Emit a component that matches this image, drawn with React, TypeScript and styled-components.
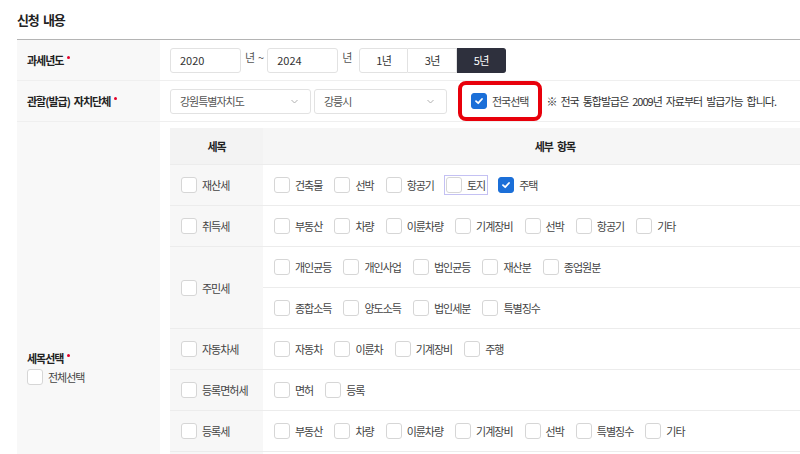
import styled, { createGlobalStyle } from "styled-components";

const GlobalStyle = createGlobalStyle`
    html, body {
        margin: 0;
        padding: 0;
        background: #ffffff;
        overflow: hidden;
    }

    body {
        font-family: "Noto Sans CJK KR", "Noto Sans", sans-serif;
        font-size: 11px;
        letter-spacing: -1px;
        word-spacing: 2.5px;
        color: #333333;
    }
`;

const Page = styled.div`
    padding: 0 17px;
`;

const Title = styled.h2`
    margin: 0;
    height: 39px;
    display: flex;
    align-items: center;
    font-size: 13px;
    font-weight: 700;
    letter-spacing: -1.3px;
    word-spacing: 3px;
    color: #222222;
`;

const Form = styled.div`
    width: 840px;
    border-top: 1px solid #b4b4b4;
`;

const FormRow = styled.div`
    display: grid;
    grid-template-columns: 143px 1fr;
    border-bottom: 1px solid #efefef;
    min-height: 40px;
`;

const LabelCell = styled.div<{ $lift?: number }>`
    background: #f8f8f8;
    padding: 0 10px ${(p) => p.$lift ?? 0}px;
    display: flex;
    flex-direction: column;
    justify-content: center;
    gap: 3px;
`;

const LabelText = styled.span`
    font-weight: 700;
    color: #222222;
    display: inline-flex;
    align-items: flex-start;
`;

const Required = styled.i`
    display: inline-block;
    width: 3px;
    height: 3px;
    border-radius: 50%;
    background: #e4002b;
    margin: 4px 0 0 4px;
`;

const ValueCell = styled.div<{ $pad?: boolean }>`
    padding: ${(p) => (p.$pad ? "6px 10px" : "0 10px")};
    display: flex;
    align-items: center;
    gap: 3px;
`;

const Input = styled.div`
    width: 71px;
    height: 25px;
    box-sizing: border-box;
    border: 1px solid #e2e2e2;
    border-radius: 3px;
    padding: 0 9px;
    display: flex;
    align-items: center;
    color: #333333;
    letter-spacing: 0;
`;

const Unit = styled.span`
    color: #555555;
    margin-bottom: 6px;
    padding: 0 1px;
`;

const ButtonGroup = styled.div`
    display: flex;
    margin-left: 4px;
`;

const RangeButton = styled.button<{ $active?: boolean; $pos: "first" | "mid" | "last" }>`
    width: 49px;
    height: 25px;
    margin: 0;
    padding: 0;
    font: inherit;
    letter-spacing: -0.5px;
    cursor: pointer;
    border: 1px solid ${(p) => (p.$active ? "#2e303d" : "#e2e2e2")};
    border-left-width: ${(p) => (p.$pos === "first" ? "1px" : "0")};
    background: ${(p) => (p.$active ? "#2e303d" : "#ffffff")};
    color: ${(p) => (p.$active ? "#ffffff" : "#333333")};
    border-radius: ${(p) =>
        p.$pos === "first" ? "3px 0 0 3px" : p.$pos === "last" ? "0 3px 3px 0" : "0"};
`;

const Select = styled.div<{ $width: number }>`
    width: ${(p) => p.$width}px;
    height: 25px;
    box-sizing: border-box;
    border: 1px solid #e2e2e2;
    border-radius: 3px;
    padding: 0 12px 0 9px;
    display: flex;
    align-items: center;
    justify-content: space-between;
    color: #555555;
`;

const Highlight = styled.div`
    height: 40px;
    box-sizing: border-box;
    border: 4px solid #e8000b;
    border-radius: 8px;
    padding: 0 10px 0 9px;
    margin-left: 8px;
    display: flex;
    align-items: center;
`;

const Notice = styled.span`
    color: #333333;
    margin-left: 1px;
`;

const CheckItem = styled.label<{ $focused?: boolean }>`
    display: inline-flex;
    align-items: center;
    gap: 5px;
    color: #444444;
    white-space: nowrap;
    cursor: pointer;
    outline: ${(p) => (p.$focused ? "1px solid #c4c1f3" : "none")};
    outline-offset: 1px;
    padding-right: ${(p) => (p.$focused ? "1px" : "0")};
`;

const Box = styled.span<{ $checked?: boolean }>`
    width: 16px;
    height: 16px;
    box-sizing: border-box;
    border-radius: 3px;
    border: 1px solid ${(p) => (p.$checked ? "#1b6fd8" : "#d6d6d6")};
    background: ${(p) => (p.$checked ? "#1b6fd8" : "#ffffff")};
    display: inline-flex;
    align-items: center;
    justify-content: center;
    flex-shrink: 0;
`;

const TaxTable = styled.div`
    width: 100%;
    border-bottom: 1px solid #ececec;
`;

const TaxRow = styled.div<{ $head?: boolean }>`
    display: grid;
    grid-template-columns: 93px 1fr;
    background: ${(p) => (p.$head ? "#f5f5f5" : "#ffffff")};
    border-bottom: 1px solid #ececec;

    &:last-child {
        border-bottom: none;
    }
`;

const HeadCell = styled.div<{ $first?: boolean }>`
    height: 36px;
    display: flex;
    align-items: center;
    justify-content: center;
    font-weight: 700;
    color: #222222;
    background: ${(p) => (p.$first ? "#f3f3f3" : "#f6f6f6")};
`;

const NameCell = styled.div`
    background: #f7f7f7;
    padding: 0 11px;
    display: flex;
    align-items: center;
`;

const Lines = styled.div`
    display: flex;
    flex-direction: column;
`;

const Line = styled.div`
    height: 40px;
    padding: 0 11px;
    display: flex;
    align-items: center;
    gap: 12px;
    border-bottom: 1px solid #ececec;

    &:last-child {
        border-bottom: none;
    }
`;

const Check = () => (
    <svg width="10" height="10" viewBox="0 0 10 10">
        <polyline points="2,5.2 4.2,7.2 8,3" fill="none" stroke="#fff" strokeWidth="1.8" strokeLinecap="round" strokeLinejoin="round" />
    </svg>
);

const Chevron = () => (
    <svg width="7" height="5" viewBox="0 0 7 5">
        <polyline points="0.5,1 3.5,4 6.5,1" fill="none" stroke="#b0b0b0" strokeWidth="1" />
    </svg>
);

const Checkbox = ({ label, checked, focused }: { label: string; checked?: boolean; focused?: boolean }) => (
    <CheckItem $focused={focused}>
        <Box $checked={checked}>{checked && <Check />}</Box>
        <span>{label}</span>
    </CheckItem>
);

type Tax = { name: string; lines: string[][] };

const taxes: Tax[] = [
    { name: "재산세", lines: [["건축물", "선박", "항공기", "토지", "주택"]] },
    { name: "취득세", lines: [["부동산", "차량", "이륜차량", "기계장비", "선박", "항공기", "기타"]] },
    {
        name: "주민세",
        lines: [
            ["개인균등", "개인사업", "법인균등", "재산분", "종업원분"],
            ["종합소득", "양도소득", "법인세분", "특별징수"],
        ],
    },
    { name: "자동차세", lines: [["자동차", "이륜차", "기계장비", "주행"]] },
    { name: "등록면허세", lines: [["면허", "등록"]] },
    { name: "등록세", lines: [["부동산", "차량", "이륜차량", "기계장비", "선박", "특별징수", "기타"]] },
    { name: "지방소득세", lines: [["종합소득", "양도소득", "법인소득", "특별징수"]] },
    { name: "레저세", lines: [["경륜", "경정", "경마", "소싸움"]] },
    { name: "담배소비세", lines: [["담배"]] },
    { name: "지방교육세", lines: [["지방교육세"]] },
];

const App = () => {
    return (
        <Page>
            <GlobalStyle />
            <Title>신청 내용</Title>
            <Form>
                <FormRow>
                    <LabelCell>
                        <LabelText>과세년도<Required /></LabelText>
                    </LabelCell>
                    <ValueCell>
                        <Input>2020</Input>
                        <Unit>년 ~</Unit>
                        <Input>2024</Input>
                        <Unit>년</Unit>
                        <ButtonGroup>
                            <RangeButton $pos="first">1년</RangeButton>
                            <RangeButton $pos="mid">3년</RangeButton>
                            <RangeButton $pos="last" $active>5년</RangeButton>
                        </ButtonGroup>
                    </ValueCell>
                </FormRow>
                <FormRow>
                    <LabelCell>
                        <LabelText>관할(발급) 자치단체<Required /></LabelText>
                    </LabelCell>
                    <ValueCell>
                        <Select $width={141}>
                            강원특별자치도
                            <Chevron />
                        </Select>
                        <Select $width={133}>
                            강릉시
                            <Chevron />
                        </Select>
                        <Highlight>
                            <Checkbox label="전국선택" checked />
                        </Highlight>
                        <Notice>※ 전국 통합발급은 2009년 자료부터 발급가능 합니다.</Notice>
                    </ValueCell>
                </FormRow>
                <FormRow>
                    <LabelCell $lift={9}>
                        <LabelText>세목선택<Required /></LabelText>
                        <Checkbox label="전체선택" />
                    </LabelCell>
                    <ValueCell $pad>
                        <TaxTable>
                            <TaxRow $head>
                                <HeadCell $first>세목</HeadCell>
                                <HeadCell>세부 항목</HeadCell>
                            </TaxRow>
                            {taxes.map((tax) => (
                                <TaxRow key={tax.name}>
                                    <NameCell>
                                        <Checkbox label={tax.name} />
                                    </NameCell>
                                    <Lines>
                                        {tax.lines.map((line, i) => (
                                            <Line key={i}>
                                                {line.map((item) => (
                                                    <Checkbox
                                                        key={item}
                                                        label={item}
                                                        checked={tax.name === "재산세" && item === "주택"}
                                                        focused={tax.name === "재산세" && item === "토지"}
                                                    />
                                                ))}
                                            </Line>
                                        ))}
                                    </Lines>
                                </TaxRow>
                            ))}
                        </TaxTable>
                    </ValueCell>
                </FormRow>
            </Form>
        </Page>
    );
};

export default App;
